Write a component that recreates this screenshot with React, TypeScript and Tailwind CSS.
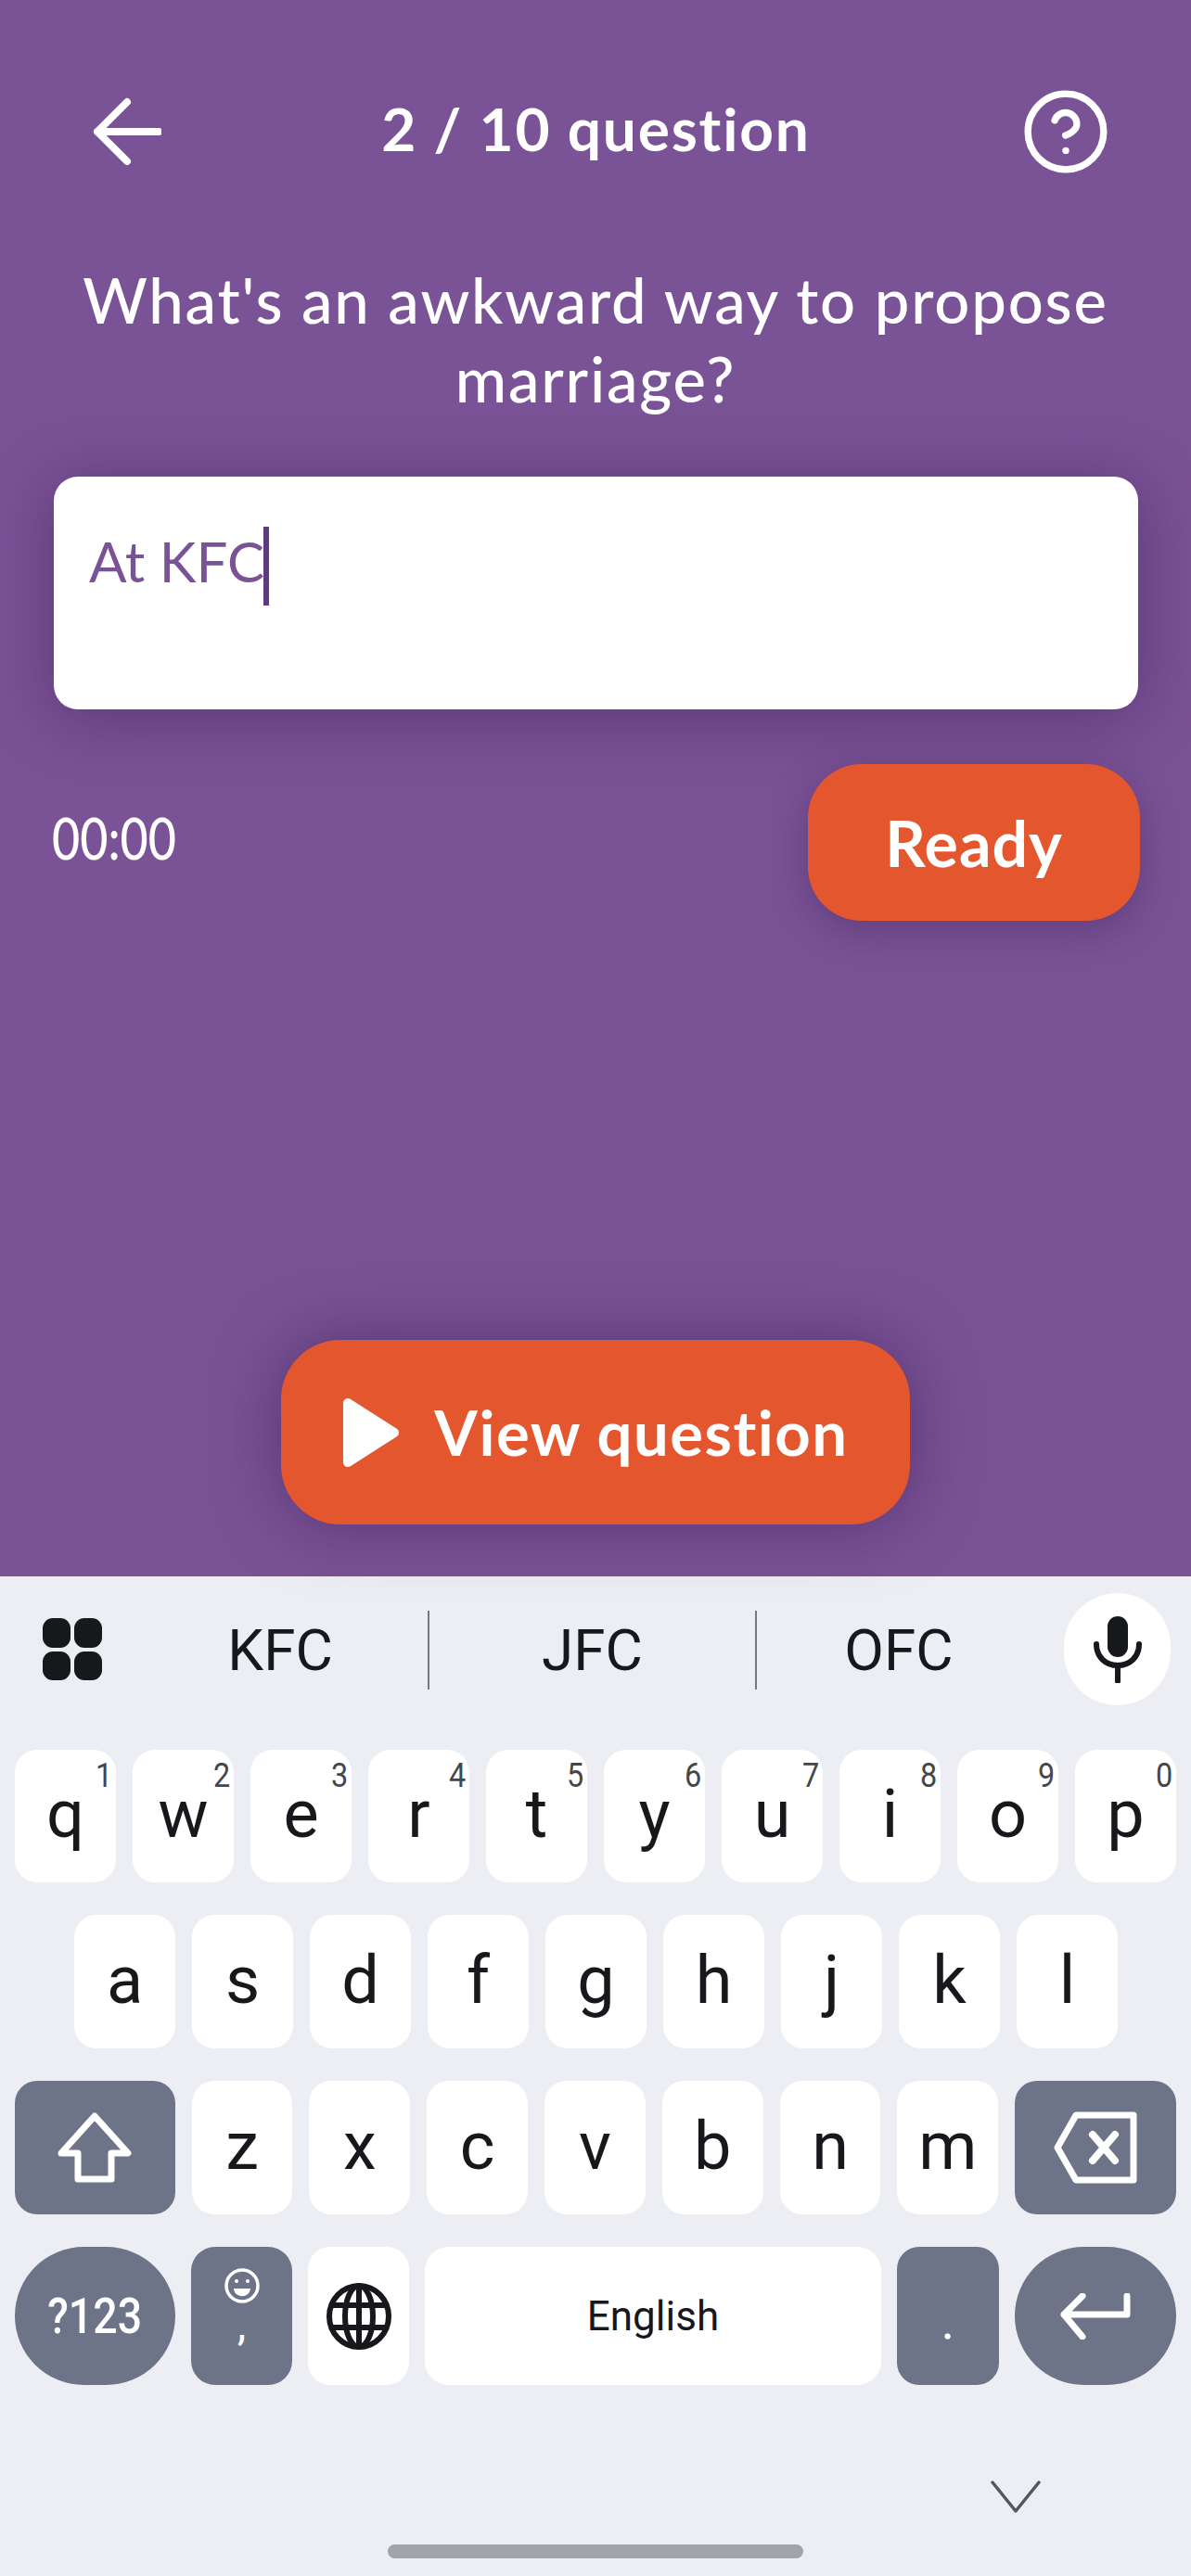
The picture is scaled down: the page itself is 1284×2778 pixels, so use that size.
import React from "react";
import { CircleHelp } from "lucide-react";

const r1: [string, string][] = [["q","1"],["w","2"],["e","3"],["r","4"],["t","5"],["y","6"],["u","7"],["i","8"],["o","9"],["p","0"]];
const r2 = ["a","s","d","f","g","h","j","k","l"];
const r3 = ["z","x","c","v","b","n","m"];

function Key({ c, sup }: { c: string; sup?: string }) {
  return (
    <div className="relative w-[109px] h-full bg-white rounded-[24px] flex items-center justify-center text-[72px] leading-none text-[#17181c] pb-[3px]">
      {c}
      {sup && <span className="absolute top-[10px] right-[3px] text-[36px] leading-[36px] text-[#44464e] scale-x-90">{sup}</span>}
    </div>
  );
}

export default function App() {
  return (
    <div className="w-[1284px] h-[2778px] overflow-hidden flex flex-col bg-[#edeef4] font-['Roboto',sans-serif]">
      <div className="h-[1700px] bg-[#7a5296] flex flex-col px-[57px] text-white font-['Lato',sans-serif]">
        <div className="pt-[96px] flex items-center justify-between h-[181px]">
          <svg width="74" height="74" viewBox="0 0 74 74" className="ml-[43px] mt-[6px]" fill="none" stroke="white" strokeWidth="8" strokeLinecap="round" strokeLinejoin="round">
            <path d="M5 37H71M37 5L5 37L37 69" />
          </svg>
          <div className="text-[64px] leading-[85px] font-bold tracking-[1.8px] ml-[11px]">2 / 10 question</div>
          <CircleHelp size={98} strokeWidth={1.8} className="mr-[29px] mt-[6px]" />
        </div>
        <div className="mt-[100px] text-center text-[67px] leading-[85px] tracking-[1.8px] font-medium -mx-[10px]">
          What's an awkward way to propose<br />marriage?
        </div>
        <div className="mt-[63px] ml-[1px] h-[251px] w-[1169px] bg-white rounded-[26px] shadow-[0_8px_70px_rgba(50,25,75,0.45)] px-[38px] pt-[54px] flex items-start">
          <span className="text-[#7a5296] text-[60px] leading-[74px]">At KFC</span>
          <span className="w-[6px] h-[85px] bg-[#5e3a80] -ml-[1px]" />
        </div>
        <div className="mt-[59px] flex justify-between items-start">
          <div className="text-[62px] leading-[72px] mt-[43px] scale-x-[0.84] origin-left -ml-[1px] font-medium">00:00</div>
          <div className="w-[358px] h-[169px] -mr-[2px] rounded-[58px] bg-[#e4572e] shadow-[0_10px_40px_rgba(50,25,75,0.35)] flex items-center justify-center text-[68px] font-bold tracking-[1px]">Ready</div>
        </div>
        <div className="mt-[452px] self-center w-[678px] h-[199px] rounded-[64px] bg-[#e4572e] shadow-[0_0_70px_rgba(50,25,75,0.5)] flex items-center justify-center gap-[37px]">
          <svg width="62" height="76" viewBox="0 0 62 76"><path d="M6 6L56 38L6 70Z" fill="white" stroke="white" strokeWidth="10" strokeLinejoin="round" /></svg>
          <span className="text-[67px] font-bold tracking-[1.5px]">View question</span>
        </div>
      </div>

      <div className="flex-1 flex flex-col px-[16px]">
        <div className="h-[187px] flex items-start relative pt-[18px]">
          <div className="ml-[30px] mt-[27px] w-[64px] h-[67px] grid grid-cols-2 gap-[4px]">
            <div className="bg-[#17181c] rounded-[11px]" /><div className="bg-[#17181c] rounded-[11px]" />
            <div className="bg-[#17181c] rounded-[11px]" /><div className="bg-[#17181c] rounded-[11px]" />
          </div>
          <div className="w-[320px] ml-[33px] h-[85px] mt-[19px] flex items-center justify-center text-[62px] text-[#17181c] border-r-2 border-[#77787e]">KFC</div>
          <div className="w-[353px] h-[85px] mt-[19px] flex items-center justify-center text-[62px] text-[#17181c] border-r-2 border-[#77787e]">JFC</div>
          <div className="w-[306px] h-[85px] mt-[19px] flex items-center justify-center text-[62px] text-[#17181c]">OFC</div>
          <div className="absolute left-[1131px] top-[18px] w-[115px] h-[121px] rounded-full bg-white flex items-center justify-center">
            <svg width="52" height="72" viewBox="0 0 52 72" fill="none">
              <rect x="15" y="0" width="22" height="44" rx="11" fill="#17181c" />
              <path d="M3 30C3 44 13 53 26 53C39 53 49 44 49 30" stroke="#17181c" strokeWidth="6" strokeLinecap="round" />
              <path d="M26 53V70" stroke="#17181c" strokeWidth="6" strokeLinecap="round" />
            </svg>
          </div>
        </div>

        <div className="h-[143px] flex gap-[18px]">
          {r1.map(([c, s]) => <Key key={c} c={c} sup={s} />)}
        </div>
        <div className="h-[144px] mt-[35px] flex gap-[18px] pl-[64px]">
          {r2.map((c) => <Key key={c} c={c} />)}
        </div>
        <div className="h-[144px] mt-[35px] flex gap-[18px]">
          <div className="w-[173px] h-full bg-[#6e7487] rounded-[24px] flex items-center justify-center">
            <svg width="80" height="76" viewBox="0 0 80 76" fill="none" stroke="white" strokeWidth="7" strokeLinejoin="round"><path d="M40 4L76 44H58V72H22V44H4Z" /></svg>
          </div>
          {r3.map((c) => <Key key={c} c={c} />)}
          <div className="w-[174px] h-full bg-[#6e7487] rounded-[24px] flex items-center justify-center">
            <svg width="90" height="78" viewBox="0 0 90 78" fill="none" stroke="white" strokeWidth="7" strokeLinejoin="round" strokeLinecap="round">
              <path d="M24 4H86V74H24L4 39Z" /><path d="M42 25L66 53M66 25L42 53" strokeWidth="8" />
            </svg>
          </div>
        </div>
        <div className="h-[149px] mt-[35px] flex gap-[17px]">
          <div className="w-[173px] h-full bg-[#6e7487] rounded-full flex items-center justify-center text-white text-[54px] font-medium"><span className="scale-x-[0.86]">?123</span></div>
          <div className="w-[109px] h-full bg-[#6e7487] rounded-[26px] flex flex-col items-center pt-[22px] text-white">
            <svg width="38" height="40" viewBox="0 0 38 40" fill="none" stroke="white" strokeWidth="3.5">
              <circle cx="19" cy="20" r="17" />
              <circle cx="13" cy="15" r="2" fill="white" stroke="none" /><circle cx="25" cy="15" r="2" fill="white" stroke="none" />
              <path d="M10 23H28C27 34 11 34 10 23Z" fill="white" stroke="none" />
            </svg>
            <span className="text-[48px] leading-[48px] -mt-[2px]">,</span>
          </div>
          <div className="w-[109px] h-full bg-white rounded-[24px] flex items-center justify-center">
            <svg width="70" height="72" viewBox="0 0 70 72" fill="none" stroke="#17181c" strokeWidth="6">
              <ellipse cx="35" cy="36" rx="32" ry="33" /><ellipse cx="35" cy="36" rx="15" ry="33" /><path d="M35 3V69M5 24H65M5 48H65" />
            </svg>
          </div>
          <div className="w-[492px] h-full bg-white rounded-[26px] flex items-center justify-center text-[44px] text-[#17181c]">English</div>
          <div className="w-[110px] h-full bg-[#6e7487] rounded-[24px] flex items-center justify-center text-white text-[56px] pt-[10px]">.</div>
          <div className="w-[174px] h-full bg-[#6e7487] rounded-full flex items-center justify-center">
            <svg width="76" height="50" viewBox="0 0 76 50" fill="none" stroke="white" strokeWidth="7" strokeLinecap="round" strokeLinejoin="round"><path d="M72 3V23H4M24 3L4 23L24 47" /></svg>
          </div>
        </div>
        <div className="mt-[103px] self-end mr-[146px] h-[35px]">
          <svg width="54" height="36" viewBox="0 0 54 36" fill="none" stroke="#55565c" strokeWidth="3.5" strokeLinecap="round" strokeLinejoin="round"><path d="M2 2L27 33L52 2" /></svg>
        </div>
        <div className="mt-[34px] self-center w-[448px] h-[15px] rounded-full bg-[#a3a4aa]" />
      </div>
    </div>
  );
}
